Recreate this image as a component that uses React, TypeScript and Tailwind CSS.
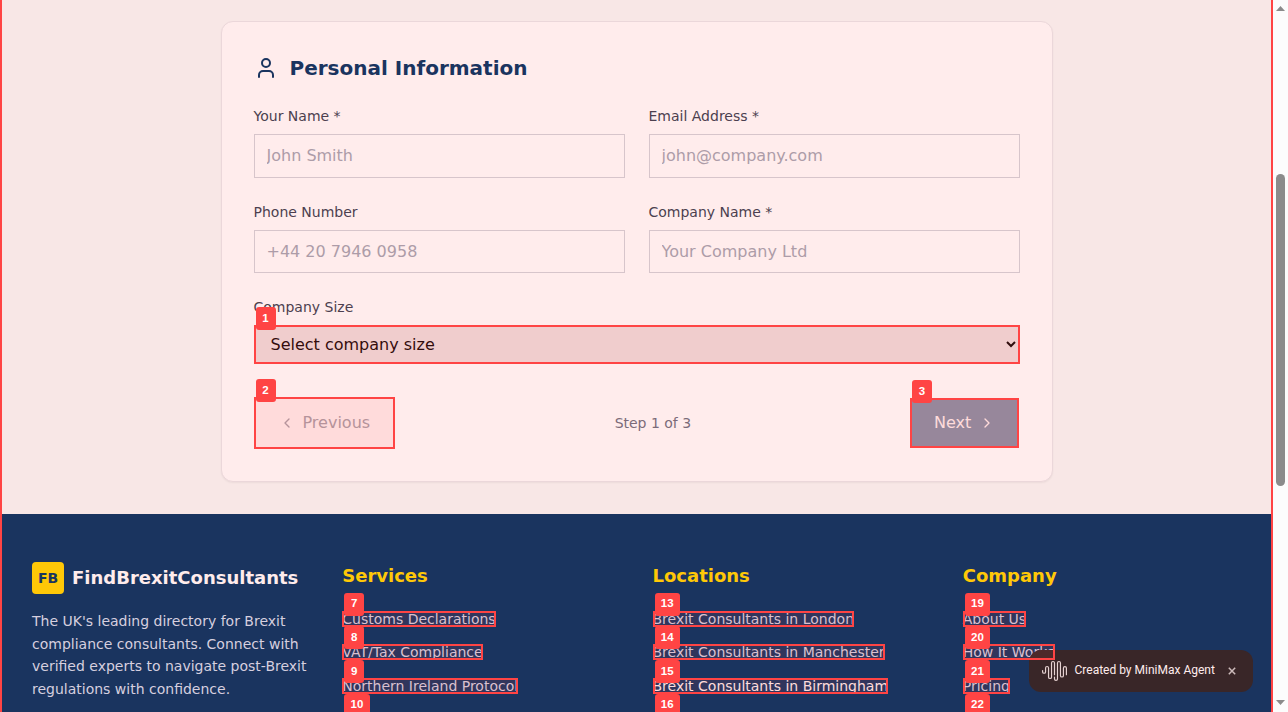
import React from "react";
import { ChevronLeft, ChevronRight, User } from "lucide-react";

function Marker({ n }: { n: number }) {
  return (
    <span className="pointer-events-none absolute inset-0 z-20 border-2 border-[#ff4444] bg-[#ff4444]/10">
      <span className="absolute -top-5 left-0 flex h-[23px] min-w-5 items-center justify-center rounded-[3px] bg-[#ff4444] px-[6.3px] font-['Liberation_Sans',Arial,sans-serif] text-[11.5px] leading-none font-bold text-white">
        {n}
      </span>
    </span>
  );
}

function Field({ label, placeholder }: { label: string; placeholder: string }) {
  return (
    <div>
      <label className="mb-2 block text-sm text-[#4c3f4f]">{label}</label>
      <input
        placeholder={placeholder}
        className="block h-[43.5px] w-full border border-[#d7c5cb] bg-transparent px-3 pb-[0.5px] text-base placeholder:text-[#ad9ca8]"
      />
    </div>
  );
}

function LinkColumn({ title, items, first, bright }: { title: string; items: string[]; first: number; bright?: number }) {
  return (
    <div>
      <h3 className="text-lg leading-7 font-bold text-[#ffc807]">{title}</h3>
      <ul className="mt-4 flex flex-col gap-2">
        {items.map((item, i) => (
          <li key={item} className="flex h-[25.6px] items-center">
            <a className={`relative mt-[0.4px] block h-4 text-sm leading-4 whitespace-nowrap ${bright === i ? "text-[#ffecec]" : "text-[#d6cfdf]"}`}>
              {item}
              <Marker n={first + i} />
            </a>
          </li>
        ))}
      </ul>
    </div>
  );
}

export default function App() {
  return (
    <div className="relative flex h-[712px] w-[1288px] overflow-hidden font-['DejaVu_Sans',sans-serif]">
      <div className="relative h-full w-[1273px] overflow-hidden bg-[#f8e7e6]">
        <section className="px-8 pt-[21.25px] pb-8">
          <div className="mx-auto h-[460.5px] w-[832px] rounded-xl border border-[#ebd7da] bg-[#ffecec] p-8 shadow-[0_1px_2px_rgba(0,0,0,0.05)]">
            <h2 className="mb-6 flex h-7 items-center gap-3 text-xl font-bold text-[#1a345f]">
              <User className="h-6 w-6" strokeWidth={2} />
              Personal Information
            </h2>
            <div className="grid grid-cols-2 gap-6">
              <Field label="Your Name *" placeholder="John Smith" />
              <Field label="Email Address *" placeholder="john@company.com" />
              <Field label="Phone Number" placeholder="+44 20 7946 0958" />
              <Field label="Company Name *" placeholder="Your Company Ltd" />
              <div className="col-span-2">
                <label className="mb-2 block text-sm text-[#4c3f4f]">Company Size</label>
                <div className="relative h-[39px]">
                  <select className="block h-full w-full border border-[#d7c5cb] bg-[#efdddd] pr-0 pl-3 text-base text-[#1a0707]">
                    <option>Select company size</option>
                  </select>
                  <Marker n={1} />
                </div>
              </div>
            </div>
            <div className="mt-[32.5px] flex items-center justify-between pr-[0.3px]">
              <button className="relative flex h-[52px] w-[141.4px] items-center gap-2 px-[25px] text-base text-[#ad9ca5]">
                <ChevronLeft className="h-4 w-4 shrink-0" />
                Previous
                <Marker n={2} />
              </button>
              <span className="pl-px text-sm text-[#7b6b79]">Step 1 of 3</span>
              <button className="relative flex h-[50px] items-center gap-2 bg-[#8c8fa5] px-6 text-base text-[#ffecec]">
                Next
                <ChevronRight className="h-4 w-4 shrink-0" />
                <Marker n={3} />
              </button>
            </div>
          </div>
        </section>

        <footer className="h-[400px] bg-[#1a345f] px-8 pt-12">
          <div className="grid grid-cols-4 gap-8">
            <div>
              <div className="flex items-center gap-2">
                <span className="flex h-8 w-8 items-center justify-center rounded bg-[#ffc807] text-sm font-bold text-[#1a345f]">FB</span>
                <span className="text-lg leading-7 font-bold text-[#ffecec]">FindBrexitConsultants</span>
              </div>
              <p className="mt-4 text-sm leading-[22.75px] text-[#d6cfdf]">
                The UK's leading directory for Brexit compliance consultants. Connect with verified experts to navigate post-Brexit regulations with confidence.
              </p>
            </div>
            <LinkColumn title="Services" first={7} items={["Customs Declarations", "VAT/Tax Compliance", "Northern Ireland Protocol", "Trade Compliance"]} />
            <LinkColumn title="Locations" first={13} bright={2} items={["Brexit Consultants in London", "Brexit Consultants in Manchester", "Brexit Consultants in Birmingham", "Brexit Consultants in Leeds"]} />
            <LinkColumn title="Company" first={19} items={["About Us", "How It Works", "Pricing", "Contact"]} />
          </div>
        </footer>

        <div className="absolute top-[650px] left-[1029px] z-10 flex h-[42px] w-[224px] items-center rounded-xl bg-[#392628] pb-[2px] pl-[13px] font-['Roboto',sans-serif] text-xs text-[#ffecec]">
          <svg viewBox="0 0 24 24" className="mt-px h-6 w-[25px] shrink-0" preserveAspectRatio="none" fill="#e6d2d2">
            <path d="M11.43 3.92a.86.86 0 1 0-1.718 0v14.236a1.999 1.999 0 0 1-3.997 0V9.022a.86.86 0 1 0-1.718 0v3.87a1.999 1.999 0 0 1-3.997 0V11.49a.57.57 0 0 1 1.139 0v1.404a.86.86 0 0 0 1.719 0V9.022a1.999 1.999 0 0 1 3.997 0v9.134a.86.86 0 0 0 1.719 0V3.92a1.998 1.998 0 1 1 3.996 0v11.788a.57.57 0 1 1-1.139 0zm10.572 3.105a2 2 0 0 0-1.999 1.997v7.63a.86.86 0 0 1-1.718 0V3.923a1.999 1.999 0 0 0-3.997 0v16.16a.86.86 0 0 1-1.719 0V18.08a.57.57 0 1 0-1.138 0v2a1.998 1.998 0 0 0 3.996 0V3.92a.86.86 0 0 1 1.719 0v12.73a1.999 1.999 0 0 0 3.996 0V9.023a.86.86 0 1 1 1.72 0v6.686a.57.57 0 0 0 1.138 0V9.022a2 2 0 0 0-1.998-1.997" />
          </svg>
          <span className="ml-[7.5px] whitespace-nowrap">Created by MiniMax Agent</span>
          <svg viewBox="0 0 8 8" className="mt-[2px] ml-[13px] h-2 w-2" fill="none" stroke="#cdbbbb" strokeWidth="1.5">
            <path d="M0.8 0.8L7.2 7.2M7.2 0.8L0.8 7.2" />
          </svg>
        </div>

        <div className="pointer-events-none absolute inset-0 z-30 border-x-2 border-[#ff4444]" />
      </div>
      <div className="flex h-full w-[15px] flex-col items-center bg-[#fcfcfc]">
        <svg className="mt-[6px] h-[5px] w-[9px]" viewBox="0 0 9 5" fill="#8b8b8b"><path d="M0 5L4.5 0L9 5Z" /></svg>
        <div className="mt-[163px] h-[312px] w-[9px] rounded-full bg-[#8b8b8b]" />
        <svg className="mt-auto mb-[7px] h-[5px] w-[9px]" viewBox="0 0 9 5" fill="#8b8b8b"><path d="M0 0L4.5 5L9 0Z" /></svg>
      </div>
    </div>
  );
}
